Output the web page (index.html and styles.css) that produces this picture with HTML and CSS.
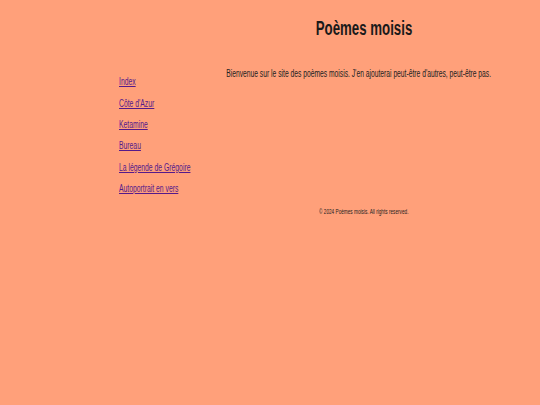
FILE: index.html
```html
<!DOCTYPE html>
<html lang="fr">
<head>
<meta charset="utf-8">
<title>Poèmes moisis</title>
<link rel="stylesheet" href="styles.css">
</head>
<body>
<div class="page">
  <header class="header"><h1 class="title narrow">Poèmes moisis</h1></header>
  <nav class="nav">
    <a href="#" class="link narrow">Index</a>
    <a href="#" class="link narrow">Côte d'Azur</a>
    <a href="#" class="link narrow">Ketamine</a>
    <a href="#" class="link narrow">Bureau</a>
    <a href="#" class="link narrow">La légende de Grégoire</a>
    <a href="#" class="link narrow">Autoportrait en vers</a>
  </nav>
  <main class="main">
    <p class="intro narrow">Bienvenue sur le site des poèmes moisis. J'en ajouterai peut-être d'autres, peut-être pas.</p>
  </main>
  <footer class="footer"><span class="copy narrow">© 2024 Poèmes moisis. All rights reserved.</span></footer>
</div>
</body>
</html>
```
FILE: styles.css
```css
html, body {
  margin: 0;
  padding: 0;
  background: #ffa07a;
}
body {
  font-family: "Liberation Sans", Arial, sans-serif;
  color: #222;
}
/* the reference uses a horizontally condensed face */
.narrow {
  white-space: nowrap;
  transform: scaleX(0.68);
}
.page {
  display: grid;
  grid-template-columns: 106px 278px;
  grid-template-rows: 60px auto auto;
  padding-left: 119px;
}
.header {
  grid-column: 2;
  grid-row: 1;
  display: flex;
  justify-content: center;
  align-items: flex-start;
  padding-top: 17px;
}
.title {
  margin: 0;
  font-size: 19.5px;
  font-weight: bold;
  line-height: 22px;
  color: #1a1a1a;
}
.nav {
  grid-column: 1;
  grid-row: 2;
  display: flex;
  flex-direction: column;
  align-items: flex-start;
  gap: 9.4px;
  padding-top: 16.2px;
}
.link {
  font-size: 10px;
  line-height: 12px;
  color: #551a8b;
  transform-origin: left center;
}
.main {
  grid-column: 2;
  grid-row: 2;
  display: flex;
  justify-content: flex-end;
  align-items: flex-start;
  padding-right: 12px;
  padding-top: 7.7px;
}
.intro {
  flex: none;
  margin: 0;
  font-size: 10px;
  line-height: 12px;
  transform: scaleX(0.672);
  transform-origin: right center;
}
.footer {
  grid-column: 2;
  grid-row: 3;
  display: flex;
  justify-content: center;
  padding-top: 13.2px;
}
.copy {
  display: block;
  font-size: 6.9px;
  line-height: 8px;
}
```
